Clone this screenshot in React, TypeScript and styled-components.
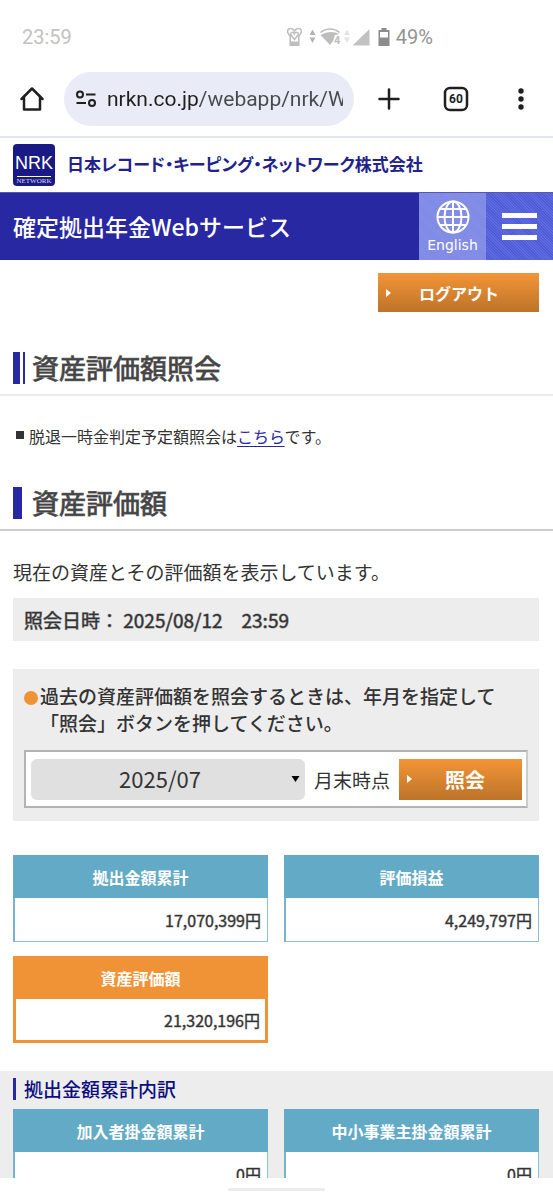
import React from "react";
import styled, { createGlobalStyle } from "styled-components";

const navy = "#2828a3";
const teal = "#62aac6";
const orange = "#f09336";
const grey = "#ededed";

const GlobalStyle = createGlobalStyle`
  * { box-sizing: border-box; }
  body {
    margin: 0;
    background: #fff;
    color: #333;
    font-family: "Noto Sans CJK JP", sans-serif;
    font-size: 16px;
  }
  button, input, select { font: inherit; color: inherit; border: 0; padding: 0; background: none; }
  h1, h2, h3, p, ul { margin: 0; padding: 0; }
`;

const Screen = styled.div`
  display: flex;
  flex-direction: column;
  height: 100vh;
`;

const StatusBar = styled.div`
  display: flex;
  align-items: center;
  flex: none;
  height: 62px;
  padding: 12px 120px 0 22px;
  font: 20px/24px Roboto, sans-serif;
  color: #c2c2c2;
`;

const StatusIcons = styled.div`
  display: flex;
  align-items: center;
  gap: 5px;
  margin-left: auto;
  color: #939393;
`;

const BrowserBar = styled.div`
  display: flex;
  align-items: center;
  flex: none;
  height: 76px;
  border-bottom: 2px solid #e4e6ee;
  color: #1f1f1f;
`;

const BarButton = styled.button<{ $width: number }>`
  display: flex;
  align-items: center;
  justify-content: center;
  flex: none;
  width: ${(p) => p.$width}px;
  height: 54px;
`;

const AddressPill = styled.label`
  display: flex;
  align-items: center;
  gap: 10px;
  flex: 1;
  min-width: 0;
  height: 54px;
  padding: 0 11px;
  border-radius: 27px;
  background: #e9ecf6;
`;

const AddressInput = styled.input`
  flex: 1;
  min-width: 0;
  height: 32px;
  font: 21px/32px Roboto, sans-serif;
  color: transparent;
  background: linear-gradient(90deg, #1f1f1f 93px, #474a4d 93px);
  background-clip: text;
  outline: 0;
`;

const Page = styled.main`
  flex: 1;
  min-height: 0;
  overflow: hidden;
`;

const GestureBar = styled.div`
  display: flex;
  justify-content: center;
  flex: none;
  height: 22px;
  padding-top: 10px;
  &::before {
    content: "";
    width: 97px;
    height: 3px;
    border-radius: 2px;
    background: #ececec;
  }
`;

const Company = styled.div`
  display: flex;
  align-items: center;
  gap: 12px;
  height: 54px;
  padding: 0 13px;
  color: #22228a;
`;

const CompanyName = styled.span`
  padding-bottom: 3px;
  font-size: 17px;
  font-weight: 700;
  font-feature-settings: "palt";
  line-height: 24px;
  white-space: nowrap;
`;

const Header = styled.header`
  display: flex;
  height: 68px;
  border-top: 1px solid #5656b8;
  background: ${navy};
  color: #fff;
`;

const ServiceName = styled.div`
  flex: 1;
  padding-left: 13px;
  font-size: 23px;
  font-weight: 500;
  line-height: 66px;
`;

const HeaderButton = styled.button<{ $tone: string; $line: string }>`
  display: flex;
  flex-direction: column;
  align-items: center;
  justify-content: center;
  gap: 2px;
  width: 67px;
  font: 14px/18px "DejaVu Sans", sans-serif;
  color: #fff;
  background: repeating-linear-gradient(45deg, ${(p) => p.$tone} 0 1px, ${(p) => p.$line} 1px 2px);
`;

const Content = styled.div`
  padding: 0 14px 0 13px;
`;

const LogoutRow = styled.div`
  display: flex;
  justify-content: flex-end;
  padding: 13px 0 30px;
`;

const ActionButton = styled.button<{ $large?: boolean }>`
  display: flex;
  align-items: center;
  flex: none;
  width: ${(p) => (p.$large ? 123 : 161)}px;
  height: ${(p) => (p.$large ? 41 : 39)}px;
  padding: 0 ${(p) => (p.$large ? 4 : 12)}px 0 8px;
  color: #fff;
  font-size: ${(p) => (p.$large ? 20 : 16)}px;
  font-weight: 700;
  background: linear-gradient(#f39537, #bd7329);
  span { flex: 1; text-align: center; }
`;

const Heading = styled.div<{ $line: string }>`
  display: flex;
  align-items: flex-end;
  gap: 10px;
  height: 54px;
  padding: 0 13px 10px;
  border-bottom: 2px solid ${(p) => p.$line};
  color: #444;
  font-size: 27px;
  line-height: 32px;
  h1, h2 {
    font-size: inherit;
    font-weight: 400;
    -webkit-text-stroke: 1px rgba(68, 68, 68, 0.8);
  }
`;

const Bars = styled.div<{ $double?: boolean }>`
  width: ${(p) => (p.$double ? 12 : 9)}px;
  height: 32px;
  margin-right: ${(p) => (p.$double ? -3 : 0)}px;
  background: ${(p) =>
    p.$double ? `linear-gradient(90deg, ${navy} 7px, #fff 7px 10px, ${navy} 10px)` : navy};
`;

const Notice = styled.li`
  display: flex;
  align-items: center;
  gap: 5px;
  padding: 28px 16px;
  line-height: 25px;
  list-style: none;
  &::before {
    content: "";
    width: 8px;
    height: 8px;
    margin-bottom: 4px;
    background: #333;
  }
  a { color: ${navy}; text-underline-offset: 3px; }
`;

const Lead = styled.p`
  padding: 27px 0 13px;
  font-size: 19px;
  line-height: 27px;
`;

const DateBox = styled.p`
  padding: 0 11px;
  background: ${grey};
  font-size: 19px;
  font-weight: 400;
  -webkit-text-stroke: 1px rgba(51, 51, 51, 0.5);
  line-height: 43px;
  white-space: pre;
`;

const QueryBox = styled.form`
  margin-top: 28px;
  padding: 13px 11px;
  background: ${grey};
`;

const QueryText = styled.p`
  display: flex;
  gap: 2px;
  font-size: 19px;
  font-weight: 500;
  line-height: 27px;
  &::before {
    content: "";
    flex: none;
    width: 14px;
    height: 14px;
    margin-top: 9px;
    border-radius: 50%;
    background: ${orange};
  }
`;

const QueryRow = styled.div`
  display: flex;
  align-items: center;
  gap: 9px;
  height: 58px;
  margin-top: 14px;
  padding: 0 4px 0 5px;
  border: 2px solid #b3b3b3;
  border-right-color: #ccc;
  background: #fff;
  font-size: 19px;
  label { flex: none; }
`;

const SelectWrap = styled.div`
  position: relative;
  flex: 1;
  min-width: 0;
  svg { position: absolute; right: 5px; top: 17px; pointer-events: none; }
`;

const Select = styled.select`
  appearance: none;
  display: block;
  width: 100%;
  height: 41px;
  padding-right: 16px;
  padding-bottom: 2px;
  border-radius: 6px;
  background: #e0e0e0;
  font-size: 22px;
  text-align: center;
  text-align-last: center;
`;

const CardGrid = styled.div`
  display: grid;
  grid-template-columns: 1fr 1fr;
  gap: 14px 16px;
`;

const Card = styled.table<{ $accent?: boolean }>`
  width: 100%;
  height: 87px;
  border-spacing: 0;
  th {
    height: 43px;
    padding: 0;
    background: ${(p) => (p.$accent ? orange : teal)};
    color: #fff;
    font-weight: 700;
    line-height: 24px;
  }
  td {
    height: 44px;
    padding: 0 ${(p) => (p.$accent ? 5 : 6)}px 0 0;
    border: ${(p) => (p.$accent ? `3px solid ${orange}` : `1px solid #8cc1d5`)};
    border-left: ${(p) => (p.$accent ? `3px solid ${orange}` : `2px solid #76b5cd`)};
    border-top: 0;
    background: #fff;
    font-weight: 400;
    -webkit-text-stroke: 1px rgba(51, 51, 51, 0.4);
    line-height: 24px;
    text-align: right;
  }
`;

const Summary = styled(Content)`
  padding-top: 34px;
  padding-bottom: 28px;
`;

const Breakdown = styled.section`
  padding: 6px 14px 28px 13px;
  background: ${grey};
  h3 {
    display: flex;
    align-items: center;
    gap: 8px;
    margin-bottom: 8px;
    color: #0d0d80;
    font-size: 19px;
    font-weight: 500;
    line-height: 24px;
  }
  h3::before { content: ""; width: 3px; height: 22px; background: ${navy}; }
`;

const ButtonArrow = () => (
  <svg width="5" height="8" viewBox="0 0 5 8" aria-hidden="true">
    <path d="M0 0L5 4L0 8Z" fill="#fff" />
  </svg>
);

const AmountCard = ({ title, amount, accent }: { title: string; amount: string; accent?: boolean }) => (
  <Card $accent={accent}>
    <thead>
      <tr><th scope="col">{title}</th></tr>
    </thead>
    <tbody>
      <tr><td>{amount}円</td></tr>
    </tbody>
  </Card>
);

const StatusGlyphs = () => (
  <svg width="87" height="20" viewBox="0 0 87 20" aria-hidden="true">
    <g fill="none" stroke="#bdbdbd" strokeWidth="1.5">
      <path d="M5 10L2.500 7C.300 4 2 1.500 4.500 1.500C6.500 1.500 7.500 2.500 8.500 4C9.500 2.500 10.500 1.500 12.500 1.500C15 1.500 16.700 4 14.500 7L12 10" />
      <path d="M4.200 9V18.200H12.800V9M8.500 12.500L4.500 7.500C4.500 5 7.500 4.600 8.500 6.800C9.500 4.600 12.500 5 12.500 7.500Z" />
    </g>
    <path d="M4 14.500H13V19H4Z" fill="#bdbdbd" />
    <path d="M23.500 8L26.500 2.500L29.500 8ZM23.500 10.500H29.500L26.500 16Z" fill="#b3b3b3" />
    <path d="M34.500 5.500C40 .800 48 .800 53.500 5.500" fill="none" stroke="#bdbdbd" strokeWidth="1.500" />
    <path d="M34.500 8Q44 2.500 53.500 7L49 8L47 14L44 18Z" fill="#bdbdbd" />
    <text x="48" y="17" fontSize="11" fontWeight="700" fontFamily="Roboto, sans-serif" fill="#bdbdbd">4</text>
    <path d="M58 8L61 2.500L64 8ZM58 10.500H64L61 16Z" fill="#e4e4e4" />
    <path d="M66.500 18.500L83.500 2V18.500Z" fill="#c2c2c2" />
  </svg>
);

const NrkLogo = () => (
  <svg width="42" height="42" viewBox="0 0 42 42" role="img" aria-label="NRK NETWORK">
    <rect width="42" height="42" rx="4" fill="#1a1a84" />
    <text x="21" y="25" textAnchor="middle" fontFamily="'Liberation Sans', sans-serif" fontSize="18" fontWeight="400" fill="#fff">NRK</text>
    <path d="M4 32.500H38" stroke="#fff" strokeWidth="1" />
    <text x="21" y="39" textAnchor="middle" fontFamily="'Liberation Serif', serif" fontSize="7" fontWeight="400" fill="#d9d9f0">NETWORK</text>
  </svg>
);

export default function App() {
  return (
    <Screen>
      <GlobalStyle />
      <StatusBar>
        <span>23:59</span>
        <StatusIcons>
          <StatusGlyphs />
          <svg width="13" height="20" viewBox="5 0 13 20" aria-hidden="true">
            <path d="M8.500 1H13.500V3H16.500V19H5.500V3H8.500ZM7 5V10.500H15V5Z" fill="#8c8c8c" fillRule="evenodd" />
          </svg>
          <span>49%</span>
        </StatusIcons>
      </StatusBar>

      <BrowserBar>
        <BarButton $width={64} aria-label="ホーム">
          <svg width="26" height="26" viewBox="0 0 26 26" fill="none" stroke="#1f1f1f" strokeWidth="2.500" strokeLinejoin="round" strokeLinecap="round">
            <path d="M2.500 13L13 2.500L23.500 13M5 11.500V23.500H21V11.500" />
          </svg>
        </BarButton>
        <AddressPill>
          <svg width="22" height="18" viewBox="0 0 22 18" fill="none" stroke="#1f1f1f" strokeWidth="2" aria-hidden="true">
            <circle cx="5" cy="4.500" r="3" />
            <path d="M11 4.500H20.500M1.500 13H11" />
            <circle cx="17" cy="13" r="3" />
          </svg>
          <AddressInput aria-label="アドレス" defaultValue="nrkn.co.jp/webapp/nrk/W" />
        </AddressPill>
        <BarButton $width={69} aria-label="新しいタブ">
          <svg width="22" height="22" viewBox="0 0 22 22" stroke="#1f1f1f" strokeWidth="2.500" strokeLinecap="round">
            <path d="M11 1.500V20.500M1.500 11H20.500" />
          </svg>
        </BarButton>
        <BarButton $width={66} aria-label="タブ一覧">
          <svg width="26" height="26" viewBox="0 0 26 26">
            <rect x="2" y="2" width="22" height="22" rx="5" fill="none" stroke="#1f1f1f" strokeWidth="2.500" />
            <text x="13" y="17" textAnchor="middle" fontFamily="Roboto, sans-serif" fontSize="12" fontWeight="700" fill="#1f1f1f">60</text>
          </svg>
        </BarButton>
        <BarButton $width={64} aria-label="メニュー">
          <svg width="6" height="22" viewBox="0 0 6 22" fill="#1f1f1f">
            <circle cx="3" cy="3" r="2.700" />
            <circle cx="3" cy="11" r="2.700" />
            <circle cx="3" cy="19" r="2.700" />
          </svg>
        </BarButton>
      </BrowserBar>

      <Page>
        <Company>
          <NrkLogo />
          <CompanyName>日本レコード・キーピング・ネットワーク株式会社</CompanyName>
        </Company>
        <Header>
          <ServiceName>確定拠出年金Webサービス</ServiceName>
          <HeaderButton $tone="#7f8ae5" $line="#858fe7">
            <svg width="34" height="34" viewBox="0 0 34 34" fill="none" stroke="#fff" strokeWidth="2" aria-hidden="true">
              <circle cx="17" cy="17" r="15.500" />
              <ellipse cx="17" cy="17" rx="8.500" ry="15.500" />
              <path d="M17 1.500V32.500M1.500 17H32.500M4 9H30M4 25H30" />
            </svg>
            English
          </HeaderButton>
          <HeaderButton $tone="#4f5cd6" $line="#5e6adf" aria-label="メニューを開く">
            <svg width="35" height="27" viewBox="0 0 35 27" fill="#fff">
              <path d="M0 0H35V5H0ZM0 11H35V16H0ZM0 22H35V27H0Z" />
            </svg>
          </HeaderButton>
        </Header>

        <Content>
          <LogoutRow>
            <ActionButton type="button">
              <ButtonArrow />
              <span>ログアウト</span>
            </ActionButton>
          </LogoutRow>
        </Content>

        <Heading $line="#ececec">
          <Bars $double />
          <h1>資産評価額照会</h1>
        </Heading>
        <ul>
          <Notice>
            <span>脱退一時金判定予定額照会は<a href="#estimate">こちら</a>です。</span>
          </Notice>
        </ul>
        <Heading $line="#cfcfcf">
          <Bars />
          <h2>資産評価額</h2>
        </Heading>

        <Content>
          <Lead>現在の資産とその評価額を表示しています。</Lead>
          <DateBox>照会日時： 2025/08/12　23:59</DateBox>
          <QueryBox onSubmit={(e) => e.preventDefault()}>
            <QueryText>
              <span>過去の資産評価額を照会するときは、年月を指定して<br />「照会」ボタンを押してください。</span>
            </QueryText>
            <QueryRow>
              <SelectWrap>
                <Select id="month" defaultValue="2025/07">
                  <option>2025/07</option>
                </Select>
                <svg width="9" height="7" viewBox="0 0 9 7" aria-hidden="true">
                  <path d="M.500 0H8.500L4.500 6Z" fill="#000" />
                </svg>
              </SelectWrap>
              <label htmlFor="month">月末時点</label>
              <ActionButton $large type="submit">
                <ButtonArrow />
                <span>照会</span>
              </ActionButton>
            </QueryRow>
          </QueryBox>
        </Content>

        <Summary>
          <CardGrid>
            <AmountCard title="拠出金額累計" amount="17,070,399" />
            <AmountCard title="評価損益" amount="4,249,797" />
            <AmountCard title="資産評価額" amount="21,320,196" accent />
          </CardGrid>
        </Summary>

        <Breakdown>
          <h3>拠出金額累計内訳</h3>
          <CardGrid>
            <AmountCard title="加入者掛金額累計" amount="0" />
            <AmountCard title="中小事業主掛金額累計" amount="0" />
          </CardGrid>
        </Breakdown>
      </Page>
      <GestureBar />
    </Screen>
  );
}
